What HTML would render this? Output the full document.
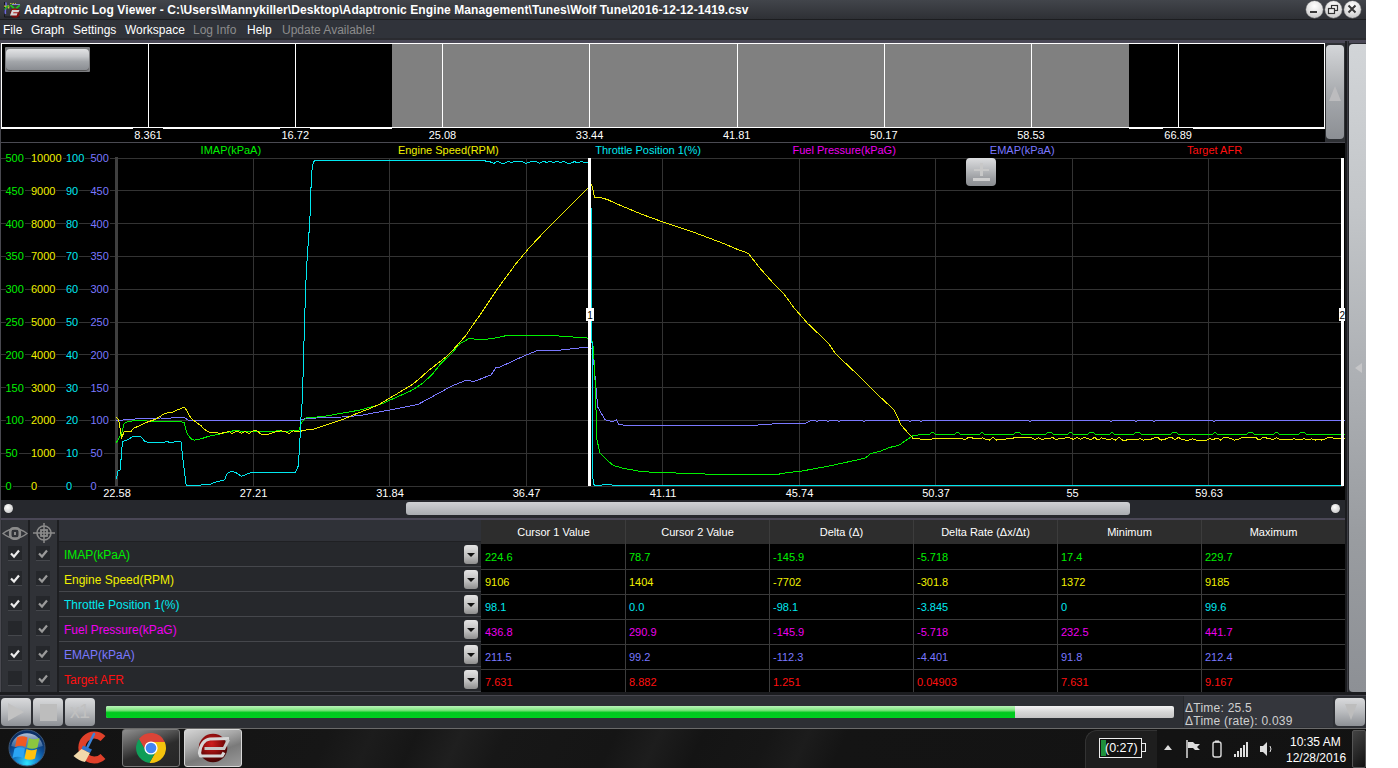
<!DOCTYPE html><html><head><meta charset="utf-8"><style>
*{margin:0;padding:0;box-sizing:border-box}
html,body{width:1398px;height:768px;overflow:hidden;background:#fff;font-family:"Liberation Sans",sans-serif}
.a{position:absolute}
.t{position:absolute;white-space:nowrap;line-height:1}
#win{position:absolute;left:0;top:0;width:1366px;height:768px;background:#2a2c31;overflow:hidden}
.menu{font-size:12px;color:#fff;top:24px}
.dis{color:#8c8c8c}
.wb{position:absolute;top:1px;width:17px;height:17px;border-radius:50%;background:radial-gradient(circle at 50% 30%,#ffffff 0%,#e6e6e6 45%,#b9b9b9 100%);box-shadow:0 0 0 0.5px #777}
.ol{position:absolute;top:43px;width:1px;height:85px;background:#fff}
.olab{font-size:11px;color:#fff;top:130px;background:#000;padding:0 1px}
.hdr{font-size:11px;top:145px}
.yl{font-size:11px;background:#000;padding:0 1px 0 0}
.xl{font-size:11px;color:#fff;top:488px}
.ck{position:absolute;width:14px;height:15px;background:#25272b;border-bottom:1px solid #45474c}
.nm{position:absolute;left:59px;width:422px;height:24px;background:#26282c}
.nmt{font-size:12px;left:64px}
.dd{position:absolute;left:464px;width:14px;height:19px;border-radius:3px;background:linear-gradient(#e4e4e4,#bdbdbd 60%,#8e8e8e)}
.dd:after{content:"";position:absolute;left:3px;top:8px;border-left:4px solid transparent;border-right:4px solid transparent;border-top:4px solid #111}
.vh{font-size:11px;color:#fff;top:527px}
.vt{font-size:11px}
.pb{position:absolute;top:698px;width:30px;height:28px;border-radius:4px;background:linear-gradient(#d9dadc,#b9bbbe 50%,#8d9095)}
</style></head><body><div id="win">
<div class="a" style="left:0;top:0;width:1366px;height:19px;background:linear-gradient(#42454b,#2e3035)"></div>
<div class="a" style="left:0;top:19px;width:1366px;height:1px;background:#1c1d20"></div>
<svg class="a" style="left:0;top:0" width="24" height="19" viewBox="0 0 24 19">
<path d="M4.5,2 L4.5,17 L20,17" stroke="#16171a" stroke-width="1" fill="none"/>
<path d="M6,2.5 Q6.5,6 5.5,9 Q5,12 5.5,14" stroke="#6e6ad8" stroke-width="1.6" fill="none"/>
<path d="M4.5,5.5 Q6,8 8,6 Q9,5.5 8.5,8.5" stroke="#c8c832" stroke-width="1.5" fill="none"/>
<path d="M4.5,9.5 Q6,7 8.5,6" stroke="#22b022" stroke-width="1.4" fill="none"/>
<path d="M10,3.5 L16,3.5" stroke="#b8b83a" stroke-width="1" stroke-dasharray="1.5,1"/>
<path d="M12,4.5 L20,4.5" stroke="#8a86d8" stroke-width="1"/>
<path d="M10.5,5 L15,9.5 L19.8,5.2" stroke="#22c022" stroke-width="1.8" fill="none"/>
<circle cx="15" cy="13" r="4.8" fill="#7a0a0a"/><circle cx="14.5" cy="12" r="3" fill="#b01818"/>
<path d="M10,15.5 L12,10 L19.5,10 L18.5,12.2 L13.5,12.2 L13,13.3 L17.5,13.3 L16.7,15.5 Z" fill="#d4d4d4"/>
</svg>
<div class="t" style="left:24px;top:4px;font-size:12px;font-weight:bold;color:#fff;letter-spacing:0.09px">Adaptronic Log Viewer - C:\Users\Mannykiller\Desktop\Adaptronic Engine Management\Tunes\Wolf Tune\2016-12-12-1419.csv</div>
<div class="wb" style="left:1305.5px"></div>
<div class="wb" style="left:1324.5px"></div>
<div class="wb" style="left:1343.5px"></div>
<div class="a" style="left:1310px;top:11px;width:7px;height:2px;background:#383838"></div>
<svg class="a" style="left:1327px;top:4px" width="12" height="12" viewBox="0 0 12 12"><rect x="4.5" y="1.5" width="6" height="5" fill="none" stroke="#333" stroke-width="1.2"/><rect x="1.5" y="4.5" width="6" height="5" fill="#ececec" stroke="#333" stroke-width="1.2"/></svg>
<svg class="a" style="left:1347px;top:4px" width="10" height="10" viewBox="0 0 10 10"><path d="M1.5,1.5 L8.5,8.5 M8.5,1.5 L1.5,8.5" stroke="#383838" stroke-width="2"/></svg>
<div class="a" style="left:0;top:20px;width:1366px;height:18px;background:#30333a"></div>
<div class="a" style="left:0;top:38px;width:1366px;height:2px;background:#2a2b30"></div>
<div class="a" style="left:0;top:40px;width:1366px;height:3px;background:#4a4856"></div>
<div class="t menu" style="left:3px">File</div>
<div class="t menu" style="left:31px">Graph</div>
<div class="t menu" style="left:73px">Settings</div>
<div class="t menu" style="left:125px">Workspace</div>
<div class="t menu dis" style="left:193px">Log Info</div>
<div class="t menu" style="left:247px">Help</div>
<div class="t menu dis" style="left:282px">Update Available!</div>
<div class="a" style="left:0;top:43px;width:1346px;height:100px;background:#000"></div>
<div class="a" style="left:392px;top:44px;width:737px;height:83px;background:#808080"></div>
<div class="a" style="left:1px;top:43px;width:1324px;height:85px;border:1px solid #fff"></div>
<div class="ol" style="left:148px"></div>
<div class="ol" style="left:295px"></div>
<div class="ol" style="left:442px"></div>
<div class="ol" style="left:589px"></div>
<div class="ol" style="left:737px"></div>
<div class="ol" style="left:884px"></div>
<div class="ol" style="left:1031px"></div>
<div class="ol" style="left:1178px"></div>
<div class="a" style="left:1px;top:128px;width:391px;height:1px;background:#fff"></div>
<div class="a" style="left:1129px;top:128px;width:196px;height:1px;background:#fff"></div>
<div class="a" style="left:133px;top:128px;width:30px;height:1px;background:#000"></div>
<div class="a" style="left:280px;top:128px;width:30px;height:1px;background:#000"></div>
<div class="a" style="left:1163px;top:128px;width:30px;height:1px;background:#000"></div>
<div class="t olab" id="ol0" style="left:133.14px;width:30px;text-align:center">8.361</div>
<div class="t olab" id="ol1" style="left:280.28px;width:30px;text-align:center">16.72</div>
<div class="t olab" id="ol2" style="left:427.41999999999996px;width:30px;text-align:center">25.08</div>
<div class="t olab" id="ol3" style="left:574.56px;width:30px;text-align:center">33.44</div>
<div class="t olab" id="ol4" style="left:721.6999999999999px;width:30px;text-align:center">41.81</div>
<div class="t olab" id="ol5" style="left:868.8399999999999px;width:30px;text-align:center">50.17</div>
<div class="t olab" id="ol6" style="left:1015.98px;width:30px;text-align:center">58.53</div>
<div class="t olab" id="ol7" style="left:1163.12px;width:30px;text-align:center">66.89</div>
<div class="a" style="left:5px;top:47px;width:85px;height:25px;background:#7c7d80;border-radius:1px"></div>
<div class="a" style="left:6px;top:49px;width:83px;height:21px;border-radius:4px;background:linear-gradient(#e2e3e5,#c6c8cb 35%,#a3a6aa 60%,#8a8d92);box-shadow:0 1px 0 #555"></div>
<div class="a" style="left:1325px;top:43px;width:20px;height:99px;background:#2e3034"></div>
<div class="a" style="left:1326px;top:45px;width:18px;height:94px;border-radius:4px;background:linear-gradient(#d4d6d9,#bfc1c4 25%,#a5a8ac 55%,#8c8f94)"></div>
<div class="a" style="left:1329px;top:86px;border-left:6.5px solid transparent;border-right:6.5px solid transparent;border-bottom:15px solid #bcbcbe"></div>
<div class="a" style="left:1345px;top:41px;width:4px;height:653px;background:linear-gradient(90deg,#1b1c1f 0,#1b1c1f 2px,#3c3d44 2px,#3c3d44 3px,#26272b 3px)"></div>
<div class="a" style="left:1349px;top:44px;width:17px;height:648px;border-radius:4px 0 0 4px;background:linear-gradient(#d2d5d8,#c3c6c9 25%,#aeb1b5 50%,#9a9da1 75%,#8d9095)"></div>
<div class="a" style="left:0;top:142px;width:1345px;height:1px;background:#4a4a52"></div>
<div class="a" style="left:1355px;top:363px;border-top:5.5px solid transparent;border-bottom:5.5px solid transparent;border-right:7px solid #c6c6c8"></div>
<div class="a" style="left:0;top:42px;width:1px;height:650px;background:#48484f"></div>
<div class="a" style="left:0;top:143px;width:1345px;height:357px;background:#000"></div>
<div class="t hdr" style="left:200.6px;color:#00f000">IMAP(kPaA)</div>
<div class="t hdr" style="left:397.9px;color:#f0f000">Engine Speed(RPM)</div>
<div class="t hdr" style="left:595.2px;color:#00e8f0">Throttle Position 1(%)</div>
<div class="t hdr" style="left:792.5px;color:#ee00ee">Fuel Pressure(kPaG)</div>
<div class="t hdr" style="left:989.8px;color:#7a78ff">EMAP(kPaA)</div>
<div class="t hdr" style="left:1187.1px;color:#ff1010">Target AFR</div>
<svg class="a" style="left:0;top:0" width="1366" height="768" viewBox="0 0 1366 768">
<rect x="0" y="158" width="1343" height="1" fill="#333333"/>
<rect x="0" y="190" width="1343" height="1" fill="#333333"/>
<rect x="0" y="223" width="1343" height="1" fill="#333333"/>
<rect x="0" y="256" width="1343" height="1" fill="#333333"/>
<rect x="0" y="289" width="1343" height="1" fill="#333333"/>
<rect x="0" y="322" width="1343" height="1" fill="#333333"/>
<rect x="0" y="354" width="1343" height="1" fill="#333333"/>
<rect x="0" y="387" width="1343" height="1" fill="#333333"/>
<rect x="0" y="420" width="1343" height="1" fill="#333333"/>
<rect x="0" y="453" width="1343" height="1" fill="#333333"/>
<rect x="0" y="486" width="1343" height="1" fill="#333333"/>
<rect x="253" y="158" width="1" height="328" fill="#333333"/>
<rect x="389" y="158" width="1" height="328" fill="#333333"/>
<rect x="526" y="158" width="1" height="328" fill="#333333"/>
<rect x="662" y="158" width="1" height="328" fill="#333333"/>
<rect x="799" y="158" width="1" height="328" fill="#333333"/>
<rect x="935" y="158" width="1" height="328" fill="#333333"/>
<rect x="1072" y="158" width="1" height="328" fill="#333333"/>
<rect x="1208" y="158" width="1" height="328" fill="#333333"/>
<rect x="115" y="157" width="3" height="329" fill="#3f3f3f"/>
<polyline points="116.3,420.6 136.0,418.9 160.8,418.0 170.0,418.4 172.5,417.6 184.2,417.6 188.2,420.2 240.0,420.0 300.2,420.4 306.0,418.4 341.8,417.0 360.0,415.5 389.7,410.0 417.8,404.5 435.0,395.2 452.2,385.8 466.2,380.3 474.0,381.5 480.0,379.2 491.2,374.8 495.9,367.8 500.0,367.0 523.8,356.0 537.4,350.5 556.6,350.5 588.3,347.0 592.5,348.8 594.6,371.7 597.7,407.0 605.0,419.6 612.3,421.7 616.5,420.0 618.5,424.2 624.8,425.4 752.0,425.4 776.8,423.7 805.5,423.4 810.7,420.6 815.0,420.6 817.0,421.8 819.0,420.6 826.0,420.6 828.0,421.8 830.0,420.6 837.0,420.6 839.0,421.8 841.0,420.6 848.0,420.6 855.0,420.6 862.0,420.6 864.0,421.8 866.0,420.6 873.0,420.6 880.0,420.6 887.0,420.6 894.0,420.6 901.0,420.6 908.0,420.6 910.0,421.8 912.0,420.6 919.0,420.6 921.0,421.8 923.0,420.6 930.0,420.6 937.0,420.6 944.0,420.6 951.0,420.6 958.0,420.6 965.0,420.6 972.0,420.6 979.0,420.6 986.0,420.6 993.0,420.6 1000.0,420.6 1007.0,420.6 1014.0,420.6 1021.0,420.6 1028.0,420.6 1030.0,421.8 1032.0,420.6 1039.0,420.6 1046.0,420.6 1053.0,420.6 1060.0,420.6 1067.0,420.6 1074.0,420.6 1081.0,420.6 1088.0,420.6 1095.0,420.6 1102.0,420.6 1109.0,420.6 1111.0,421.8 1113.0,420.6 1120.0,420.6 1127.0,420.6 1134.0,420.6 1136.0,421.8 1138.0,420.6 1145.0,420.6 1152.0,420.6 1154.0,421.8 1156.0,420.6 1163.0,420.6 1170.0,420.6 1177.0,420.6 1184.0,420.6 1191.0,420.6 1198.0,420.6 1205.0,420.6 1212.0,420.6 1214.0,421.8 1216.0,420.6 1223.0,420.6 1230.0,420.6 1237.0,420.6 1244.0,420.6 1251.0,420.6 1258.0,420.6 1265.0,420.6 1272.0,420.6 1279.0,420.6 1286.0,420.6 1293.0,420.6 1300.0,420.6 1307.0,420.6 1314.0,420.6 1321.0,420.6 1328.0,420.6 1335.0,420.6 1342.0,420.6 1345.0,420.6" fill="none" stroke="#7a78ff" stroke-width="1" shape-rendering="crispEdges"/>
<polyline points="116.3,442.8 121.7,433.0 124.3,423.2 127.0,422.0 136.0,420.2 146.5,420.6 149.0,421.9 180.3,421.3 184.2,422.6 186.9,433.0 190.8,438.8 194.7,440.1 201.2,438.8 209.0,436.2 218.1,434.3 222.0,433.6 229.8,431.7 235.7,430.2 240.0,431.0 249.0,431.0 258.0,431.0 267.0,431.0 276.0,431.0 277.0,430.2 279.0,430.2 280.0,431.0 289.0,431.0 298.8,430.9 301.6,422.3 306.0,418.0 323.1,416.5 351.8,411.5 360.0,410.0 380.3,404.5 411.6,390.5 422.5,383.4 431.9,374.8 441.2,363.1 450.6,354.5 460.0,343.6 469.4,338.4 477.2,339.4 491.2,338.9 507.3,335.4 551.1,335.4 589.4,338.2 591.5,338.3 593.5,348.8 595.6,392.5 596.7,438.3 599.8,452.9 607.0,460.2 613.3,465.4 623.8,468.5 642.5,471.7 663.3,472.7 700.0,473.6 710.4,474.5 776.8,474.5 788.6,472.3 799.0,471.6 830.2,465.8 856.7,460.0 865.4,458.0 870.8,453.4 880.0,451.4 889.5,447.5 898.9,445.2 912.9,435.8 924.6,434.0 930.0,434.0 931.0,432.8 934.0,432.8 935.0,434.0 940.0,434.0 945.0,434.0 950.0,434.0 955.0,434.0 956.0,432.8 959.0,432.8 960.0,434.0 965.0,434.0 970.0,434.0 975.0,434.0 980.0,434.0 981.0,432.8 983.0,432.8 984.0,434.0 989.0,434.0 994.0,434.0 999.0,434.0 1004.0,434.0 1009.0,434.0 1014.0,434.0 1015.0,432.8 1020.0,432.8 1021.0,434.0 1026.0,434.0 1031.0,434.0 1036.0,434.0 1041.0,434.0 1046.0,434.0 1047.0,432.8 1052.0,432.8 1053.0,434.0 1058.0,434.0 1063.0,434.0 1068.0,434.0 1069.0,432.8 1072.0,432.8 1073.0,434.0 1078.0,434.0 1083.0,434.0 1088.0,434.0 1089.0,432.8 1094.0,432.8 1095.0,434.0 1100.0,434.0 1105.0,434.0 1110.0,434.0 1111.0,432.8 1113.0,432.8 1114.0,434.0 1119.0,434.0 1124.0,434.0 1129.0,434.0 1134.0,434.0 1135.0,432.8 1140.0,432.8 1141.0,434.0 1146.0,434.0 1151.0,434.0 1156.0,434.0 1161.0,434.0 1166.0,434.0 1171.0,434.0 1172.0,432.8 1177.0,432.8 1178.0,434.0 1183.0,434.0 1188.0,434.0 1193.0,434.0 1198.0,434.0 1203.0,434.0 1208.0,434.0 1213.0,434.0 1214.0,432.8 1216.0,432.8 1217.0,434.0 1222.0,434.0 1227.0,434.0 1232.0,434.0 1237.0,434.0 1242.0,434.0 1247.0,434.0 1248.0,432.8 1253.0,432.8 1254.0,434.0 1259.0,434.0 1264.0,434.0 1269.0,434.0 1274.0,434.0 1275.0,432.8 1278.0,432.8 1279.0,434.0 1284.0,434.0 1289.0,434.0 1294.0,434.0 1299.0,434.0 1300.0,432.8 1305.0,432.8 1306.0,434.0 1311.0,434.0 1316.0,434.0 1321.0,434.0 1326.0,434.0 1331.0,434.0 1336.0,434.0 1341.0,434.0 1345.0,434.0" fill="none" stroke="#00f000" stroke-width="1" shape-rendering="crispEdges"/>
<polyline points="116.3,417.0 118.5,419.3 121.7,437.5 124.3,431.7 130.8,431.7 133.4,428.4 147.8,421.9 155.6,419.3 164.7,413.4 172.5,412.1 183.0,407.6 184.9,407.6 190.8,418.0 194.7,421.3 201.2,425.8 203.8,429.0 210.3,433.0 214.2,432.3 220.7,433.6 224.6,432.3 229.8,431.7 232.1,433.7 237.2,430.9 241.5,433.3 245.0,431.5 249.0,433.5 253.0,430.9 257.0,430.9 261.0,434.1 265.0,434.1 269.0,434.1 273.0,432.5 277.0,431.5 281.0,430.9 285.0,431.5 289.0,433.5 293.0,430.9 298.8,431.6 308.8,429.4 313.1,429.4 330.3,423.7 344.6,418.7 356.1,413.7 370.0,408.5 380.3,403.8 396.0,394.4 411.6,385.0 419.4,378.8 427.2,371.7 438.1,363.1 445.9,356.9 453.8,349.0 466.2,335.0 472.5,325.6 480.0,315.0 496.4,290.3 515.5,264.3 529.2,247.9 548.4,227.4 567.5,208.3 588.0,187.8 591.5,184.5 593.0,190.0 594.5,197.5 600.3,197.3 608.5,200.0 615.6,203.4 642.2,214.4 665.6,223.0 693.8,232.3 725.0,244.0 736.0,248.8 748.4,253.4 759.4,267.5 771.9,281.6 780.0,290.2 784.0,294.0 793.4,307.0 807.5,323.3 828.6,343.3 835.6,353.8 859.0,376.0 875.4,392.5 894.2,410.0 901.2,425.3 912.9,438.2 922.3,439.3 960.0,438.2 965.0,439.5 968.5,437.3 972.0,437.9 975.5,438.7 979.0,438.7 982.5,437.9 986.0,439.5 989.5,440.1 993.0,437.3 996.5,440.1 1000.0,439.5 1003.5,439.5 1007.0,438.7 1010.5,438.7 1014.0,437.9 1017.5,437.9 1021.0,437.3 1024.5,437.3 1028.0,437.3 1031.5,437.9 1035.0,439.5 1038.5,437.9 1042.0,439.5 1045.5,438.7 1049.0,438.7 1052.5,437.3 1056.0,439.5 1059.5,438.7 1063.0,438.7 1066.5,437.3 1070.0,437.9 1073.5,439.5 1077.0,437.3 1080.5,439.5 1084.0,437.3 1087.5,438.7 1091.0,439.5 1094.5,437.3 1098.0,440.1 1101.5,437.9 1105.0,438.7 1108.5,439.5 1112.0,438.7 1115.5,440.1 1119.0,437.3 1122.5,440.1 1126.0,440.1 1129.5,439.5 1133.0,439.5 1136.5,439.5 1140.0,438.7 1143.5,440.1 1147.0,439.5 1150.5,439.5 1154.0,437.9 1157.5,437.3 1161.0,440.1 1164.5,439.5 1168.0,437.9 1171.5,437.3 1175.0,439.5 1178.5,437.3 1182.0,439.5 1185.5,440.1 1189.0,440.1 1192.5,438.7 1196.0,440.1 1199.5,440.1 1203.0,440.1 1206.5,440.1 1210.0,438.7 1213.5,439.5 1217.0,437.9 1220.5,440.1 1224.0,437.3 1227.5,437.3 1231.0,438.7 1234.5,440.1 1238.0,439.5 1241.5,437.9 1245.0,437.3 1248.5,437.9 1252.0,437.9 1255.5,437.3 1259.0,440.1 1262.5,437.9 1266.0,437.9 1269.5,438.7 1273.0,439.5 1276.5,437.9 1280.0,439.5 1283.5,439.5 1287.0,439.5 1290.5,439.5 1294.0,438.7 1297.5,439.5 1301.0,439.5 1304.5,438.7 1308.0,440.1 1311.5,438.7 1315.0,440.1 1318.5,439.5 1322.0,440.1 1325.5,438.7 1329.0,437.3 1332.5,437.9 1336.0,438.7 1339.5,438.7 1343.0,438.7 1345.0,438.5" fill="none" stroke="#f0f000" stroke-width="1" shape-rendering="crispEdges"/>
<polyline points="116.5,478.6 118.0,470.8 120.2,470.0 122.4,441.5 128.2,439.5 133.4,436.2 140.6,436.2 144.5,441.0 148.4,442.8 162.8,442.8 166.0,441.5 172.5,442.8 175.1,441.5 181.0,441.5 183.0,460.3 186.2,485.0 201.2,485.0 210.3,484.4 214.2,482.5 224.6,479.9 227.2,473.4 231.1,471.4 235.7,472.4 241.5,476.3 251.5,472.4 295.2,472.4 298.0,466.7 299.5,448.8 300.9,418.7 302.4,398.6 304.6,320.0 306.0,280.2 307.4,254.5 308.9,234.4 310.3,211.5 311.2,181.5 312.3,165.8 314.6,160.0 320.0,160.0 326.0,160.0 328.0,161.1 330.0,160.0 336.0,160.0 342.0,160.0 344.0,161.1 346.0,160.0 352.0,160.0 358.0,160.0 364.0,160.0 366.0,161.1 368.0,160.0 374.0,160.0 380.0,160.0 382.0,161.1 384.0,160.0 390.0,160.0 396.0,160.0 398.0,161.1 400.0,160.0 406.0,160.0 408.0,161.1 410.0,160.0 416.0,160.0 422.0,160.0 428.0,160.0 430.0,161.1 432.0,160.0 438.0,160.0 444.0,160.0 450.0,160.0 456.0,160.0 462.0,160.0 468.0,160.0 474.0,160.0 476.0,161.1 478.0,160.0 480.5,160.0 492.0,162.3 494.0,163.4 497.5,161.2 501.0,163.0 504.5,163.4 508.0,161.6 511.5,162.3 515.0,161.6 518.5,161.2 522.0,161.6 525.5,163.4 529.0,162.3 532.5,161.6 536.0,161.6 539.5,163.4 543.0,161.2 546.5,162.3 550.0,161.6 553.5,162.3 557.0,161.6 560.5,162.3 564.0,161.6 567.5,163.4 571.0,163.0 574.5,161.6 578.0,163.0 581.5,161.2 585.0,163.0 590.0,162.0 591.3,222.0 592.8,478.0 594.2,485.5 611.0,484.5 613.0,485.5 1343.0,485.5" fill="none" stroke="#00e8f0" stroke-width="1" shape-rendering="crispEdges"/>
<rect x="588" y="158" width="3" height="328" fill="#fff"/>
<rect x="1341" y="158" width="3" height="328" fill="#fff"/>
</svg>
<div class="a" style="left:586px;top:308px;width:8px;height:13px;background:#fff"></div><div class="t" style="left:587px;top:311px;font-size:10px;color:#000;width:6px;text-align:center">1</div>
<div class="a" style="left:1339px;top:308px;width:6px;height:13px;background:#fff;overflow:hidden"><div class="t" style="left:0.5px;top:3px;font-size:10px;color:#000">2</div></div>
<div class="a" style="left:966px;top:158px;width:30px;height:28px;border-radius:4px;background:linear-gradient(#dcdddf,#b6b8bb 45%,#9a9ca0 75%,#8a8d91)"></div>
<div class="a" style="left:980px;top:163px;width:3px;height:13px;background:#c8c8c8"></div><div class="a" style="left:974px;top:168.5px;width:15px;height:2.5px;background:#c8c8c8"></div><div class="a" style="left:973px;top:178px;width:17px;height:3px;background:#cfcfcf"></div>
<div class="t yl" style="left:5.5px;top:153.0px;color:#00f000">500</div>
<div class="t yl" style="left:5.5px;top:185.8px;color:#00f000">450</div>
<div class="t yl" style="left:5.5px;top:218.6px;color:#00f000">400</div>
<div class="t yl" style="left:5.5px;top:251.4px;color:#00f000">350</div>
<div class="t yl" style="left:5.5px;top:284.2px;color:#00f000">300</div>
<div class="t yl" style="left:5.5px;top:317.0px;color:#00f000">250</div>
<div class="t yl" style="left:5.5px;top:349.8px;color:#00f000">200</div>
<div class="t yl" style="left:5.5px;top:382.6px;color:#00f000">150</div>
<div class="t yl" style="left:5.5px;top:415.4px;color:#00f000">100</div>
<div class="t yl" style="left:5.5px;top:448.2px;color:#00f000">50</div>
<div class="t yl" style="left:5.5px;top:481.0px;color:#00f000">0</div>
<div class="t yl" style="left:31px;top:153.0px;color:#f0f000">10000</div>
<div class="t yl" style="left:31px;top:185.8px;color:#f0f000">9000</div>
<div class="t yl" style="left:31px;top:218.6px;color:#f0f000">8000</div>
<div class="t yl" style="left:31px;top:251.4px;color:#f0f000">7000</div>
<div class="t yl" style="left:31px;top:284.2px;color:#f0f000">6000</div>
<div class="t yl" style="left:31px;top:317.0px;color:#f0f000">5000</div>
<div class="t yl" style="left:31px;top:349.8px;color:#f0f000">4000</div>
<div class="t yl" style="left:31px;top:382.6px;color:#f0f000">3000</div>
<div class="t yl" style="left:31px;top:415.4px;color:#f0f000">2000</div>
<div class="t yl" style="left:31px;top:448.2px;color:#f0f000">1000</div>
<div class="t yl" style="left:31px;top:481.0px;color:#f0f000">0</div>
<div class="t yl" style="left:66px;top:153.0px;color:#00e8f0">100</div>
<div class="t yl" style="left:66px;top:185.8px;color:#00e8f0">90</div>
<div class="t yl" style="left:66px;top:218.6px;color:#00e8f0">80</div>
<div class="t yl" style="left:66px;top:251.4px;color:#00e8f0">70</div>
<div class="t yl" style="left:66px;top:284.2px;color:#00e8f0">60</div>
<div class="t yl" style="left:66px;top:317.0px;color:#00e8f0">50</div>
<div class="t yl" style="left:66px;top:349.8px;color:#00e8f0">40</div>
<div class="t yl" style="left:66px;top:382.6px;color:#00e8f0">30</div>
<div class="t yl" style="left:66px;top:415.4px;color:#00e8f0">20</div>
<div class="t yl" style="left:66px;top:448.2px;color:#00e8f0">10</div>
<div class="t yl" style="left:66px;top:481.0px;color:#00e8f0">0</div>
<div class="t yl" style="left:90.5px;top:153.0px;color:#7a78ff">500</div>
<div class="t yl" style="left:90.5px;top:185.8px;color:#7a78ff">450</div>
<div class="t yl" style="left:90.5px;top:218.6px;color:#7a78ff">400</div>
<div class="t yl" style="left:90.5px;top:251.4px;color:#7a78ff">350</div>
<div class="t yl" style="left:90.5px;top:284.2px;color:#7a78ff">300</div>
<div class="t yl" style="left:90.5px;top:317.0px;color:#7a78ff">250</div>
<div class="t yl" style="left:90.5px;top:349.8px;color:#7a78ff">200</div>
<div class="t yl" style="left:90.5px;top:382.6px;color:#7a78ff">150</div>
<div class="t yl" style="left:90.5px;top:415.4px;color:#7a78ff">100</div>
<div class="t yl" style="left:90.5px;top:448.2px;color:#7a78ff">50</div>
<div class="t yl" style="left:90.5px;top:481.0px;color:#7a78ff">0</div>
<div class="t xl" style="left:97.0px;width:40px;text-align:center">22.58</div>
<div class="t xl" style="left:233.5px;width:40px;text-align:center">27.21</div>
<div class="t xl" style="left:370.0px;width:40px;text-align:center">31.84</div>
<div class="t xl" style="left:506.5px;width:40px;text-align:center">36.47</div>
<div class="t xl" style="left:643.0px;width:40px;text-align:center">41.11</div>
<div class="t xl" style="left:779.5px;width:40px;text-align:center">45.74</div>
<div class="t xl" style="left:916.0px;width:40px;text-align:center">50.37</div>
<div class="t xl" style="left:1052.5px;width:40px;text-align:center">55</div>
<div class="t xl" style="left:1189.0px;width:40px;text-align:center">59.63</div>
<div class="a" style="left:0;top:500px;width:1345px;height:19px;background:#26282d"></div>
<div class="a" style="left:4px;top:504px;width:9px;height:9px;border-radius:50%;background:radial-gradient(circle at 40% 35%,#fff,#bbb)"></div>
<div class="a" style="left:1331px;top:504px;width:9px;height:9px;border-radius:50%;background:radial-gradient(circle at 40% 35%,#fff,#bbb)"></div>
<div class="a" style="left:406px;top:502px;width:724px;height:13px;border-radius:3px;background:linear-gradient(#cfd1d4,#a9acb0)"></div>
<div class="a" style="left:0;top:518px;width:1345px;height:2px;background:#4a4756"></div>
<div class="a" style="left:0;top:520px;width:481px;height:173px;background:#2b2d32"></div>
<div class="a" style="left:2px;top:520px;width:26px;height:172px;background:#303237"></div>
<div class="a" style="left:28px;top:520px;width:2px;height:172px;background:#1d1e21"></div>
<div class="a" style="left:30px;top:520px;width:27px;height:172px;background:#303237"></div>
<div class="a" style="left:57px;top:520px;width:2px;height:172px;background:#1d1e21"></div>
<div class="a" style="left:59px;top:520px;width:422px;height:21px;background:#2f3137"></div>
<div class="a" style="left:59px;top:541px;width:422px;height:1px;background:#1f2023"></div>
<svg class="a" style="left:2px;top:526px" width="26" height="15" viewBox="0 0 26 15">
<path d="M1,7.5 Q13,-2 25,7.5 Q13,17 1,7.5 Z" fill="none" stroke="#8b8b8b" stroke-width="1.3"/>
<rect x="8.2" y="2.3" width="9.6" height="10.4" rx="3.5" fill="none" stroke="#8b8b8b" stroke-width="2.6"/>
<rect x="12" y="6" width="2" height="3" fill="#8b8b8b"/>
</svg>
<svg class="a" style="left:33px;top:523px" width="22" height="20" viewBox="0 0 22 20">
<circle cx="11" cy="10" r="7" fill="none" stroke="#8b8b8b" stroke-width="1.6"/>
<rect x="8" y="7" width="6" height="6" fill="none" stroke="#8b8b8b" stroke-width="1.8"/>
<line x1="11" y1="0" x2="11" y2="20" stroke="#8b8b8b" stroke-width="1.5"/>
<line x1="0" y1="10" x2="22" y2="10" stroke="#8b8b8b" stroke-width="1.5"/>
</svg>
<div class="nm" style="top:542px"></div>
<div class="a" style="left:59px;top:566px;width:422px;height:1px;background:#45474c"></div>
<div class="t nmt" style="top:549px;color:#00f000">IMAP(kPaA)</div>
<div class="dd" style="top:545px"></div>
<div class="ck" style="left:8px;top:546px"><svg width="14" height="15" viewBox="0 0 14 15" style="position:absolute;left:0;top:0"><polyline points="3,7.5 6,10.5 11,4.5" fill="none" stroke="#ececec" stroke-width="2.2"/></svg></div>
<div class="ck" style="left:36px;top:546px"><svg width="14" height="15" viewBox="0 0 14 15" style="position:absolute;left:0;top:0"><polyline points="3,7.5 6,10.5 11,4.5" fill="none" stroke="#9a9a9a" stroke-width="2.2"/></svg></div>
<div class="nm" style="top:567px"></div>
<div class="a" style="left:59px;top:591px;width:422px;height:1px;background:#45474c"></div>
<div class="t nmt" style="top:574px;color:#f0f000">Engine Speed(RPM)</div>
<div class="dd" style="top:570px"></div>
<div class="ck" style="left:8px;top:571px"><svg width="14" height="15" viewBox="0 0 14 15" style="position:absolute;left:0;top:0"><polyline points="3,7.5 6,10.5 11,4.5" fill="none" stroke="#ececec" stroke-width="2.2"/></svg></div>
<div class="ck" style="left:36px;top:571px"><svg width="14" height="15" viewBox="0 0 14 15" style="position:absolute;left:0;top:0"><polyline points="3,7.5 6,10.5 11,4.5" fill="none" stroke="#9a9a9a" stroke-width="2.2"/></svg></div>
<div class="nm" style="top:592px"></div>
<div class="a" style="left:59px;top:616px;width:422px;height:1px;background:#45474c"></div>
<div class="t nmt" style="top:599px;color:#00e8f0">Throttle Position 1(%)</div>
<div class="dd" style="top:595px"></div>
<div class="ck" style="left:8px;top:596px"><svg width="14" height="15" viewBox="0 0 14 15" style="position:absolute;left:0;top:0"><polyline points="3,7.5 6,10.5 11,4.5" fill="none" stroke="#ececec" stroke-width="2.2"/></svg></div>
<div class="ck" style="left:36px;top:596px"><svg width="14" height="15" viewBox="0 0 14 15" style="position:absolute;left:0;top:0"><polyline points="3,7.5 6,10.5 11,4.5" fill="none" stroke="#9a9a9a" stroke-width="2.2"/></svg></div>
<div class="nm" style="top:617px"></div>
<div class="a" style="left:59px;top:641px;width:422px;height:1px;background:#45474c"></div>
<div class="t nmt" style="top:624px;color:#ee00ee">Fuel Pressure(kPaG)</div>
<div class="dd" style="top:620px"></div>
<div class="ck" style="left:8px;top:621px"></div>
<div class="ck" style="left:36px;top:621px"><svg width="14" height="15" viewBox="0 0 14 15" style="position:absolute;left:0;top:0"><polyline points="3,7.5 6,10.5 11,4.5" fill="none" stroke="#9a9a9a" stroke-width="2.2"/></svg></div>
<div class="nm" style="top:642px"></div>
<div class="a" style="left:59px;top:666px;width:422px;height:1px;background:#45474c"></div>
<div class="t nmt" style="top:649px;color:#7a78ff">EMAP(kPaA)</div>
<div class="dd" style="top:645px"></div>
<div class="ck" style="left:8px;top:646px"><svg width="14" height="15" viewBox="0 0 14 15" style="position:absolute;left:0;top:0"><polyline points="3,7.5 6,10.5 11,4.5" fill="none" stroke="#ececec" stroke-width="2.2"/></svg></div>
<div class="ck" style="left:36px;top:646px"><svg width="14" height="15" viewBox="0 0 14 15" style="position:absolute;left:0;top:0"><polyline points="3,7.5 6,10.5 11,4.5" fill="none" stroke="#9a9a9a" stroke-width="2.2"/></svg></div>
<div class="nm" style="top:667px"></div>
<div class="a" style="left:59px;top:691px;width:422px;height:1px;background:#45474c"></div>
<div class="t nmt" style="top:674px;color:#ff1010">Target AFR</div>
<div class="dd" style="top:670px"></div>
<div class="ck" style="left:8px;top:671px"></div>
<div class="ck" style="left:36px;top:671px"><svg width="14" height="15" viewBox="0 0 14 15" style="position:absolute;left:0;top:0"><polyline points="3,7.5 6,10.5 11,4.5" fill="none" stroke="#9a9a9a" stroke-width="2.2"/></svg></div>
<div class="a" style="left:481px;top:520px;width:864px;height:24px;background:#2d2d2d"></div>
<div class="a" style="left:481px;top:544px;width:864px;height:149px;background:#000"></div>
<div class="t vh" style="left:481.5px;width:144px;text-align:center">Cursor 1 Value</div>
<div class="t vh" style="left:625.5px;width:144px;text-align:center">Cursor 2 Value</div>
<div class="a" style="left:625px;top:520px;width:1px;height:173px;background:#3c3c3c"></div>
<div class="t vh" style="left:769.5px;width:144px;text-align:center">Delta (&Delta;)</div>
<div class="a" style="left:769px;top:520px;width:1px;height:173px;background:#3c3c3c"></div>
<div class="t vh" style="left:913.5px;width:144px;text-align:center">Delta Rate (&Delta;x/&Delta;t)</div>
<div class="a" style="left:913px;top:520px;width:1px;height:173px;background:#3c3c3c"></div>
<div class="t vh" style="left:1057.5px;width:144px;text-align:center">Minimum</div>
<div class="a" style="left:1057px;top:520px;width:1px;height:173px;background:#3c3c3c"></div>
<div class="t vh" style="left:1201.5px;width:144px;text-align:center">Maximum</div>
<div class="a" style="left:1201px;top:520px;width:1px;height:173px;background:#3c3c3c"></div>
<div class="a" style="left:481px;top:569px;width:864px;height:1px;background:#3a3a3a"></div>
<div class="a" style="left:481px;top:594px;width:864px;height:1px;background:#3a3a3a"></div>
<div class="a" style="left:481px;top:619px;width:864px;height:1px;background:#3a3a3a"></div>
<div class="a" style="left:481px;top:644px;width:864px;height:1px;background:#3a3a3a"></div>
<div class="a" style="left:481px;top:669px;width:864px;height:1px;background:#3a3a3a"></div>
<div class="t vt" style="left:485.0px;top:552px;color:#00f000">224.6</div>
<div class="t vt" style="left:629.0px;top:552px;color:#00f000">78.7</div>
<div class="t vt" style="left:773.0px;top:552px;color:#00f000">-145.9</div>
<div class="t vt" style="left:917.0px;top:552px;color:#00f000">-5.718</div>
<div class="t vt" style="left:1061.0px;top:552px;color:#00f000">17.4</div>
<div class="t vt" style="left:1205.0px;top:552px;color:#00f000">229.7</div>
<div class="t vt" style="left:485.0px;top:577px;color:#f0f000">9106</div>
<div class="t vt" style="left:629.0px;top:577px;color:#f0f000">1404</div>
<div class="t vt" style="left:773.0px;top:577px;color:#f0f000">-7702</div>
<div class="t vt" style="left:917.0px;top:577px;color:#f0f000">-301.8</div>
<div class="t vt" style="left:1061.0px;top:577px;color:#f0f000">1372</div>
<div class="t vt" style="left:1205.0px;top:577px;color:#f0f000">9185</div>
<div class="t vt" style="left:485.0px;top:602px;color:#00e8f0">98.1</div>
<div class="t vt" style="left:629.0px;top:602px;color:#00e8f0">0.0</div>
<div class="t vt" style="left:773.0px;top:602px;color:#00e8f0">-98.1</div>
<div class="t vt" style="left:917.0px;top:602px;color:#00e8f0">-3.845</div>
<div class="t vt" style="left:1061.0px;top:602px;color:#00e8f0">0</div>
<div class="t vt" style="left:1205.0px;top:602px;color:#00e8f0">99.6</div>
<div class="t vt" style="left:485.0px;top:627px;color:#ee00ee">436.8</div>
<div class="t vt" style="left:629.0px;top:627px;color:#ee00ee">290.9</div>
<div class="t vt" style="left:773.0px;top:627px;color:#ee00ee">-145.9</div>
<div class="t vt" style="left:917.0px;top:627px;color:#ee00ee">-5.718</div>
<div class="t vt" style="left:1061.0px;top:627px;color:#ee00ee">232.5</div>
<div class="t vt" style="left:1205.0px;top:627px;color:#ee00ee">441.7</div>
<div class="t vt" style="left:485.0px;top:652px;color:#7a78ff">211.5</div>
<div class="t vt" style="left:629.0px;top:652px;color:#7a78ff">99.2</div>
<div class="t vt" style="left:773.0px;top:652px;color:#7a78ff">-112.3</div>
<div class="t vt" style="left:917.0px;top:652px;color:#7a78ff">-4.401</div>
<div class="t vt" style="left:1061.0px;top:652px;color:#7a78ff">91.8</div>
<div class="t vt" style="left:1205.0px;top:652px;color:#7a78ff">212.4</div>
<div class="t vt" style="left:485.0px;top:677px;color:#ff1010">7.631</div>
<div class="t vt" style="left:629.0px;top:677px;color:#ff1010">8.882</div>
<div class="t vt" style="left:773.0px;top:677px;color:#ff1010">1.251</div>
<div class="t vt" style="left:917.0px;top:677px;color:#ff1010">0.04903</div>
<div class="t vt" style="left:1061.0px;top:677px;color:#ff1010">7.631</div>
<div class="t vt" style="left:1205.0px;top:677px;color:#ff1010">9.167</div>
<div class="a" style="left:0;top:692px;width:1366px;height:3px;background:#1b1c1f"></div>
<div class="a" style="left:0;top:695px;width:1366px;height:34px;background:#2d2f34;border-top:1px solid #45454d"></div>
<div class="pb" style="left:1px"></div>
<div class="pb" style="left:33px"></div>
<div class="pb" style="left:65px"></div>
<div class="a" style="left:8px;top:703px;border-top:9px solid transparent;border-bottom:9px solid transparent;border-left:16px solid #c2c2c2"></div>
<div class="a" style="left:40px;top:704px;width:17px;height:17px;background:#bdbdbd"></div>
<div class="t" style="left:70px;top:700.5px;font-size:20px;color:#c0c0c0;letter-spacing:-1px">x1</div>
<div class="a" style="left:106px;top:706px;width:1068px;height:12px;border-radius:2px;background:linear-gradient(#f4f4f4,#d6d6d6 50%,#c4c4c4)"></div>
<div class="a" style="left:106px;top:706px;width:909px;height:12px;border-radius:2px 0 0 2px;background:linear-gradient(#b8f5b8,#7fe47f 35%,#00c81e 55%,#00d020)"></div>
<div class="a" style="left:1183px;top:696px;width:150px;height:31px;background:#34363c;border-left:1px solid #25272b"></div>
<div class="t" style="left:1185px;top:702px;font-size:12px;color:#d0d0d0;letter-spacing:0.25px">&Delta;Time: 25.5</div>
<div class="t" style="left:1185px;top:715px;font-size:12px;color:#d0d0d0;letter-spacing:0.25px">&Delta;Time (rate): 0.039</div>
<div class="a" style="left:1335px;top:698px;width:30px;height:28px;border-radius:4px;background:linear-gradient(#d9dadc,#b9bbbe 50%,#8d9095)"></div>
<div class="a" style="left:1344.5px;top:704px;border-left:6.3px solid transparent;border-right:6.3px solid transparent;border-top:16px solid #bdbdbd"></div>
<div class="a" style="left:0;top:728px;width:1366px;height:40px;background:linear-gradient(115deg,#121212 0px,#161616 300px,#1c1c1c 340px,#161616 380px,#1f1f1f 420px,#171717 460px,#151515 560px,#1d1d1d 600px,#141414 640px,#161616 700px,#1c1c1c 735px,#141414 770px,#121212 1366px)"></div>
<div class="a" style="left:0;top:728px;width:1366px;height:1px;background:#6a6a6a"></div>
<svg class="a" style="left:8px;top:729px" width="38" height="38" viewBox="0 0 38 38">
<defs>
<radialGradient id="orbg" cx="50%" cy="92%" r="75%"><stop offset="0" stop-color="#2ee6ff"/><stop offset="0.35" stop-color="#1a8fd6"/><stop offset="0.7" stop-color="#0d4f98"/><stop offset="1" stop-color="#0a2f66"/></radialGradient>
<linearGradient id="orbh" x1="0" y1="0" x2="0" y2="1"><stop offset="0" stop-color="#e8f2ff" stop-opacity="0.75"/><stop offset="1" stop-color="#9cc0e0" stop-opacity="0.25"/></linearGradient>
</defs>
<circle cx="19" cy="19" r="18" fill="url(#orbg)" stroke="#3d5878" stroke-width="1"/>
<path d="M3.2,17 A16,15 0 0 1 34.8,17 Q19,22 3.2,17 Z" fill="url(#orbh)"/>
<path d="M9,8.5 Q14,6 19.5,8.5 L17.5,18 Q12.5,15.5 7,18 Z" fill="#f05a22"/>
<path d="M21,9 Q26,11.5 31.5,9 L29.5,18.5 Q24.5,21 19,18.5 Z" fill="#8cc63f"/>
<path d="M6.5,19.5 Q12,17 17,19.5 L15,29 Q10,26.5 4.5,29 Z" fill="#2aa4f4"/>
<path d="M18.5,20 Q23.5,22.5 29,20 L27,29.5 Q22,32 16.5,29.5 Z" fill="#ffc20e"/>
</svg>
<svg class="a" style="left:72px;top:731px" width="34" height="33" viewBox="0 0 34 33">
<path d="M31,7.5 A12.5,12.5 0 1 0 31,25.5" fill="none" stroke="#e0402a" stroke-width="7"/>
<path d="M22,3 L15.5,16" stroke="#3b82d6" stroke-width="2.6" stroke-linecap="round"/>
<path d="M11,14.5 L20,18.5 L18,22 L9.5,18 Z" fill="#2f74cc"/>
<path d="M9.5,18 L18,22 L13,31 Q7,30 1.5,25 Z" fill="#f2d9ab"/>
</svg>
<div class="a" style="left:122px;top:729px;width:58px;height:38px;border-radius:3px;border:1px solid #7a7a7a;background:linear-gradient(160deg,#8e8e8e 0%,#5a5a5a 30%,#2c2c2c 55%,#262626 100%)"></div>
<svg class="a" style="left:135px;top:732px" width="32" height="32" viewBox="-16 -16 32 32">
<path d="M0,-6 L-5.2,3 L-12.07,-8.9 A15,15 0 0 1 13.75,-6 Z" fill="#db4437"/>
<path d="M5.2,3 L0,-6 L13.75,-6 A15,15 0 0 1 -1.67,14.9 Z" fill="#f4c20d"/>
<path d="M-5.2,3 L5.2,3 L-1.67,14.9 A15,15 0 0 1 -12.07,-8.9 Z" fill="#0f9d58"/>
<circle r="6.6" fill="#fff"/><circle r="5.3" fill="#4285f4"/>
</svg>
<div class="a" style="left:184px;top:729px;width:58px;height:38px;border-radius:3px;border:1px solid #d8d8d8;background:linear-gradient(160deg,#d4d4d4 0%,#a8a8a8 35%,#7a7a7a 60%,#9a9a9a 100%)"></div>
<svg class="a" style="left:196px;top:732px" width="34" height="32" viewBox="-17 -16 34 32">
<defs><radialGradient id="adr" cx="45%" cy="35%" r="60%"><stop offset="0" stop-color="#d02020"/><stop offset="0.6" stop-color="#8a0c0c"/><stop offset="1" stop-color="#4a0404"/></radialGradient></defs>
<circle cx="0" cy="0" r="14.3" fill="url(#adr)"/>
<path d="M16,-9.5 L-3,-9 Q-12,-8 -13.5,5 L-12.5,8 L9,8 L11,4.5" fill="none" stroke="#d6d6d6" stroke-width="3.2" stroke-linejoin="round"/>
<path d="M-8.5,0.5 L11,0.5 L15.5,-8.5" fill="none" stroke="#c8c8c8" stroke-width="3"/>
</svg>
<div class="a" style="left:1085px;top:730px;width:72px;height:38px;border-radius:12px 0 0 0;background:#1e1e1e;border-left:1px solid #333;border-top:1px solid #333"></div>
<div class="a" style="left:1099px;top:738px;width:43px;height:20px;border:1px solid #eee;background:#111"></div>
<div class="a" style="left:1142px;top:743px;width:4px;height:9px;border:1px solid #eee;border-left:none"></div>
<div class="a" style="left:1101px;top:740px;width:5px;height:16px;background:#1f8f3a"></div>
<div class="t" style="left:1105px;top:742px;font-size:12.5px;color:#fff">(0:27)</div>
<div class="a" style="left:1164px;top:745px;border-left:4px solid transparent;border-right:4px solid transparent;border-bottom:5px solid #ddd"></div>
<svg class="a" style="left:1184px;top:739px" width="90" height="20" viewBox="0 0 90 20">
<path d="M3,1 L3,19" stroke="#ddd" stroke-width="1.5"/><path d="M4,3 L9,3 L11,5 L16,5 L13,8 L16,11 L11,11 L9,9 L4,9 Z" fill="#ddd"/>
<rect x="29" y="3" width="8" height="15" rx="2" fill="none" stroke="#ddd" stroke-width="1.4"/><rect x="31" y="1.5" width="4" height="2" fill="#ddd"/>
<rect x="50" y="15" width="2" height="3" fill="#ddd"/><rect x="53" y="12" width="2" height="6" fill="#ddd"/><rect x="56" y="9" width="2" height="9" fill="#ddd"/><rect x="59" y="6" width="2" height="12" fill="#ddd"/><rect x="62" y="3" width="2" height="15" fill="#ddd"/>
<path d="M76,7 L79,7 L83,3 L83,17 L79,13 L76,13 Z" fill="#ddd"/><path d="M86,7 Q88,10 86,13" stroke="#ddd" fill="none"/>
</svg>
<div class="t" style="left:1290px;top:736px;font-size:12px;color:#fff">10:35 AM</div>
<div class="t" style="left:1286px;top:752px;font-size:12px;color:#fff">12/28/2016</div>
<div class="a" style="left:1352px;top:730px;width:14px;height:38px;border:1px solid #555;border-radius:2px;background:linear-gradient(135deg,#444,#111)"></div>
<div class="a" style="left:0;top:42px;width:1px;height:650px;background:#48484f"></div>
</div></body></html>
